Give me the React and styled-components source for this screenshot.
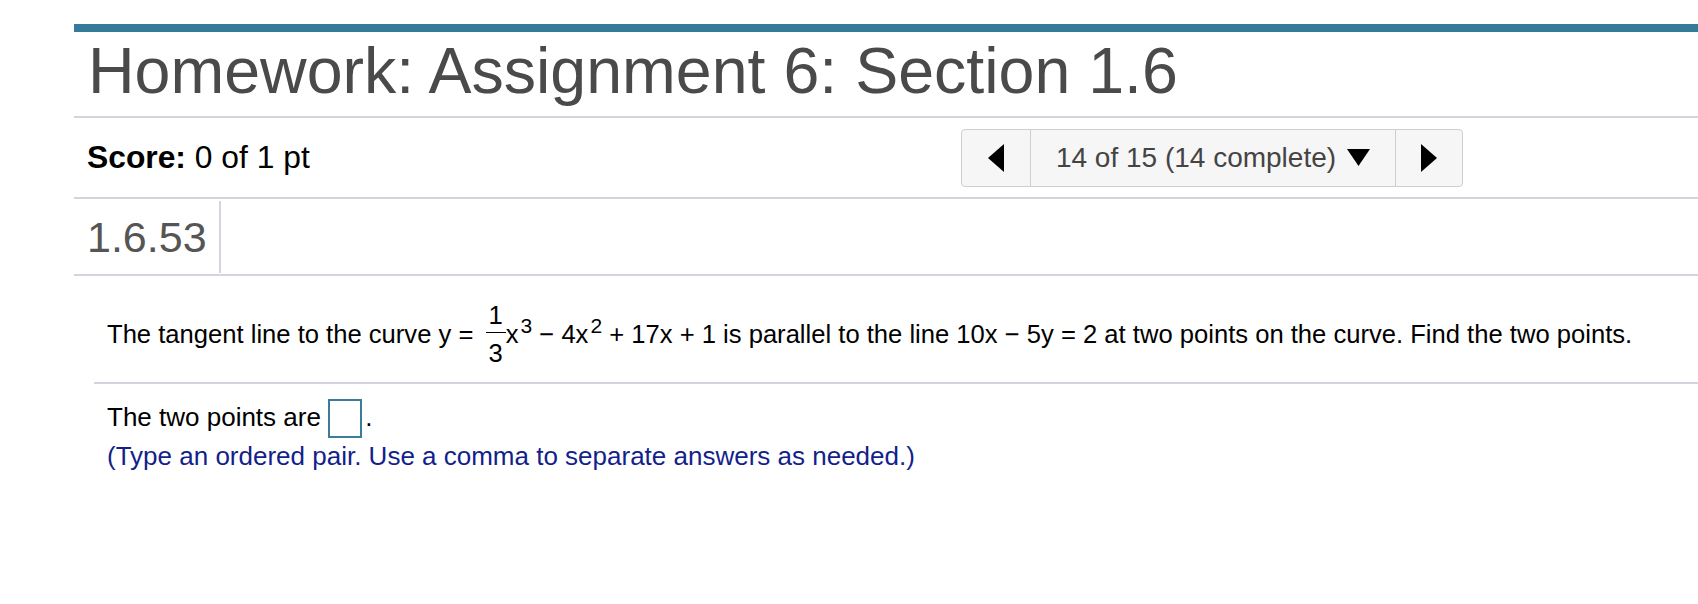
import React from "react";
import styled, { createGlobalStyle } from "styled-components";

const GlobalStyle = createGlobalStyle`
  body {
    margin: 0;
    background: #fff;
    font-family: "Liberation Sans", Arial, Helvetica, sans-serif;
    overflow: hidden;
  }
`;

const Page = styled.div`
  margin-left: 74px;
  padding-top: 24px;
`;

const TopBar = styled.div`
  height: 8px;
  background: #347a99;
`;

const Title = styled.h1`
  margin: 0;
  padding: 0 0 6px 14px;
  font-size: 64.5px;
  line-height: 78px;
  font-weight: normal;
  color: #4a4a4a;
  border-bottom: 2px solid #d3d5de;
  white-space: nowrap;
`;

const ScoreRow = styled.div`
  display: flex;
  align-items: center;
  justify-content: space-between;
  height: 79px;
  padding: 0 235px 0 13px;
  border-bottom: 2px solid #d3d5de;
`;

const Score = styled.div`
  font-size: 31.8px;
  color: #000;
  b {
    font-weight: bold;
  }
`;

const Nav = styled.div`
  display: flex;
  width: 502px;
  height: 58px;
  box-sizing: border-box;
  border: 1px solid #cfcfcf;
  border-radius: 4px;
  background: #f6f6f6;
`;

const NavCell = styled.div`
  display: flex;
  align-items: center;
  justify-content: center;
  gap: 11px;
  width: ${(p) => p.$w}px;
  border-left: ${(p) => (p.$divider ? "1px solid #cfcfcf" : "none")};
  font-size: 28px;
  color: #444;
`;

const Arrow = ({ dir }) => (
  <svg width="16" height="28" viewBox="0 0 16 28">
    {dir === "left" ? (
      <polygon points="16,0 16,28 0,14" fill="#000" />
    ) : (
      <polygon points="0,0 0,28 16,14" fill="#000" />
    )}
  </svg>
);

const Caret = () => (
  <svg width="23" height="17" viewBox="0 0 23 17">
    <polygon points="0,0 23,0 11.5,17" fill="#000" />
  </svg>
);

const IdRow = styled.div`
  display: flex;
  height: 75px;
  align-items: center;
  border-bottom: 2px solid #d3d5de;
`;

const IdCell = styled.div`
  height: 72px;
  line-height: 72px;
  padding: 0 12px 0 13px;
  font-size: 43px;
  color: #555;
  border-right: 2px solid #d3d5de;
`;

const Body = styled.div`
  margin-left: 20px;
  color: #000;
  font-size: 26px;
`;

const Question = styled.div`
  padding: 27px 0 17px 13px;
  font-size: 25.6px;
  line-height: 30px;
  white-space: nowrap;
  border-bottom: 2px solid #d3d5de;
`;

const Frac = styled.span`
  display: inline-flex;
  flex-direction: column;
  align-items: center;
  vertical-align: 19px;
  margin-left: 5px;
`;

const FracPart = styled.span`
  line-height: 24px;
  padding: 0 3px;
`;

const FracBar = styled.span`
  align-self: stretch;
  height: 1px;
  background: #000;
  margin: ${(p) => p.$m};
`;

const Sup = styled.span`
  font-size: 21px;
  vertical-align: 10px;
  margin-left: 2px;
`;

const Answer = styled.div`
  padding: 15px 0 0 13px;
  line-height: 30px;
`;

const AnswerBox = styled.span`
  display: inline-block;
  box-sizing: border-box;
  width: 34px;
  height: 39px;
  border: 2px solid #3b7c99;
  vertical-align: -12px;
  margin-right: 3px;
`;

const Hint = styled.div`
  padding-left: 13px;
  margin-top: 3px;
  line-height: 30px;
  color: #131f8a;
`;

export default function App() {
  return (
    <>
      <GlobalStyle />
      <Page>
        <TopBar />
        <Title>Homework: Assignment 6: Section 1.6</Title>
        <ScoreRow>
          <Score>
            <b>Score:</b> 0 of 1 pt
          </Score>
          <Nav>
            <NavCell $w={68}>
              <Arrow dir="left" />
            </NavCell>
            <NavCell $w={366} $divider>
              <span>14 of 15 (14 complete)</span>
              <Caret />
            </NavCell>
            <NavCell $w={66} $divider>
              <Arrow dir="right" />
            </NavCell>
          </Nav>
        </ScoreRow>
        <IdRow>
          <IdCell>1.6.53</IdCell>
        </IdRow>
        <Body>
          <Question>
            The tangent line to the curve y ={" "}
            <Frac>
              <FracPart>1</FracPart>
              <FracBar $m="5px 0 8px" />
              <FracPart>3</FracPart>
            </Frac>
            x<Sup>3</Sup> − 4x<Sup>2</Sup> + 17x + 1 is parallel to the line
            10x − 5y = 2 at two points on the curve. Find the two points.
          </Question>
          <Answer>
            The two points are <AnswerBox />.
          </Answer>
          <Hint>(Type an ordered pair. Use a comma to separate answers as needed.)</Hint>
        </Body>
      </Page>
    </>
  );
}
